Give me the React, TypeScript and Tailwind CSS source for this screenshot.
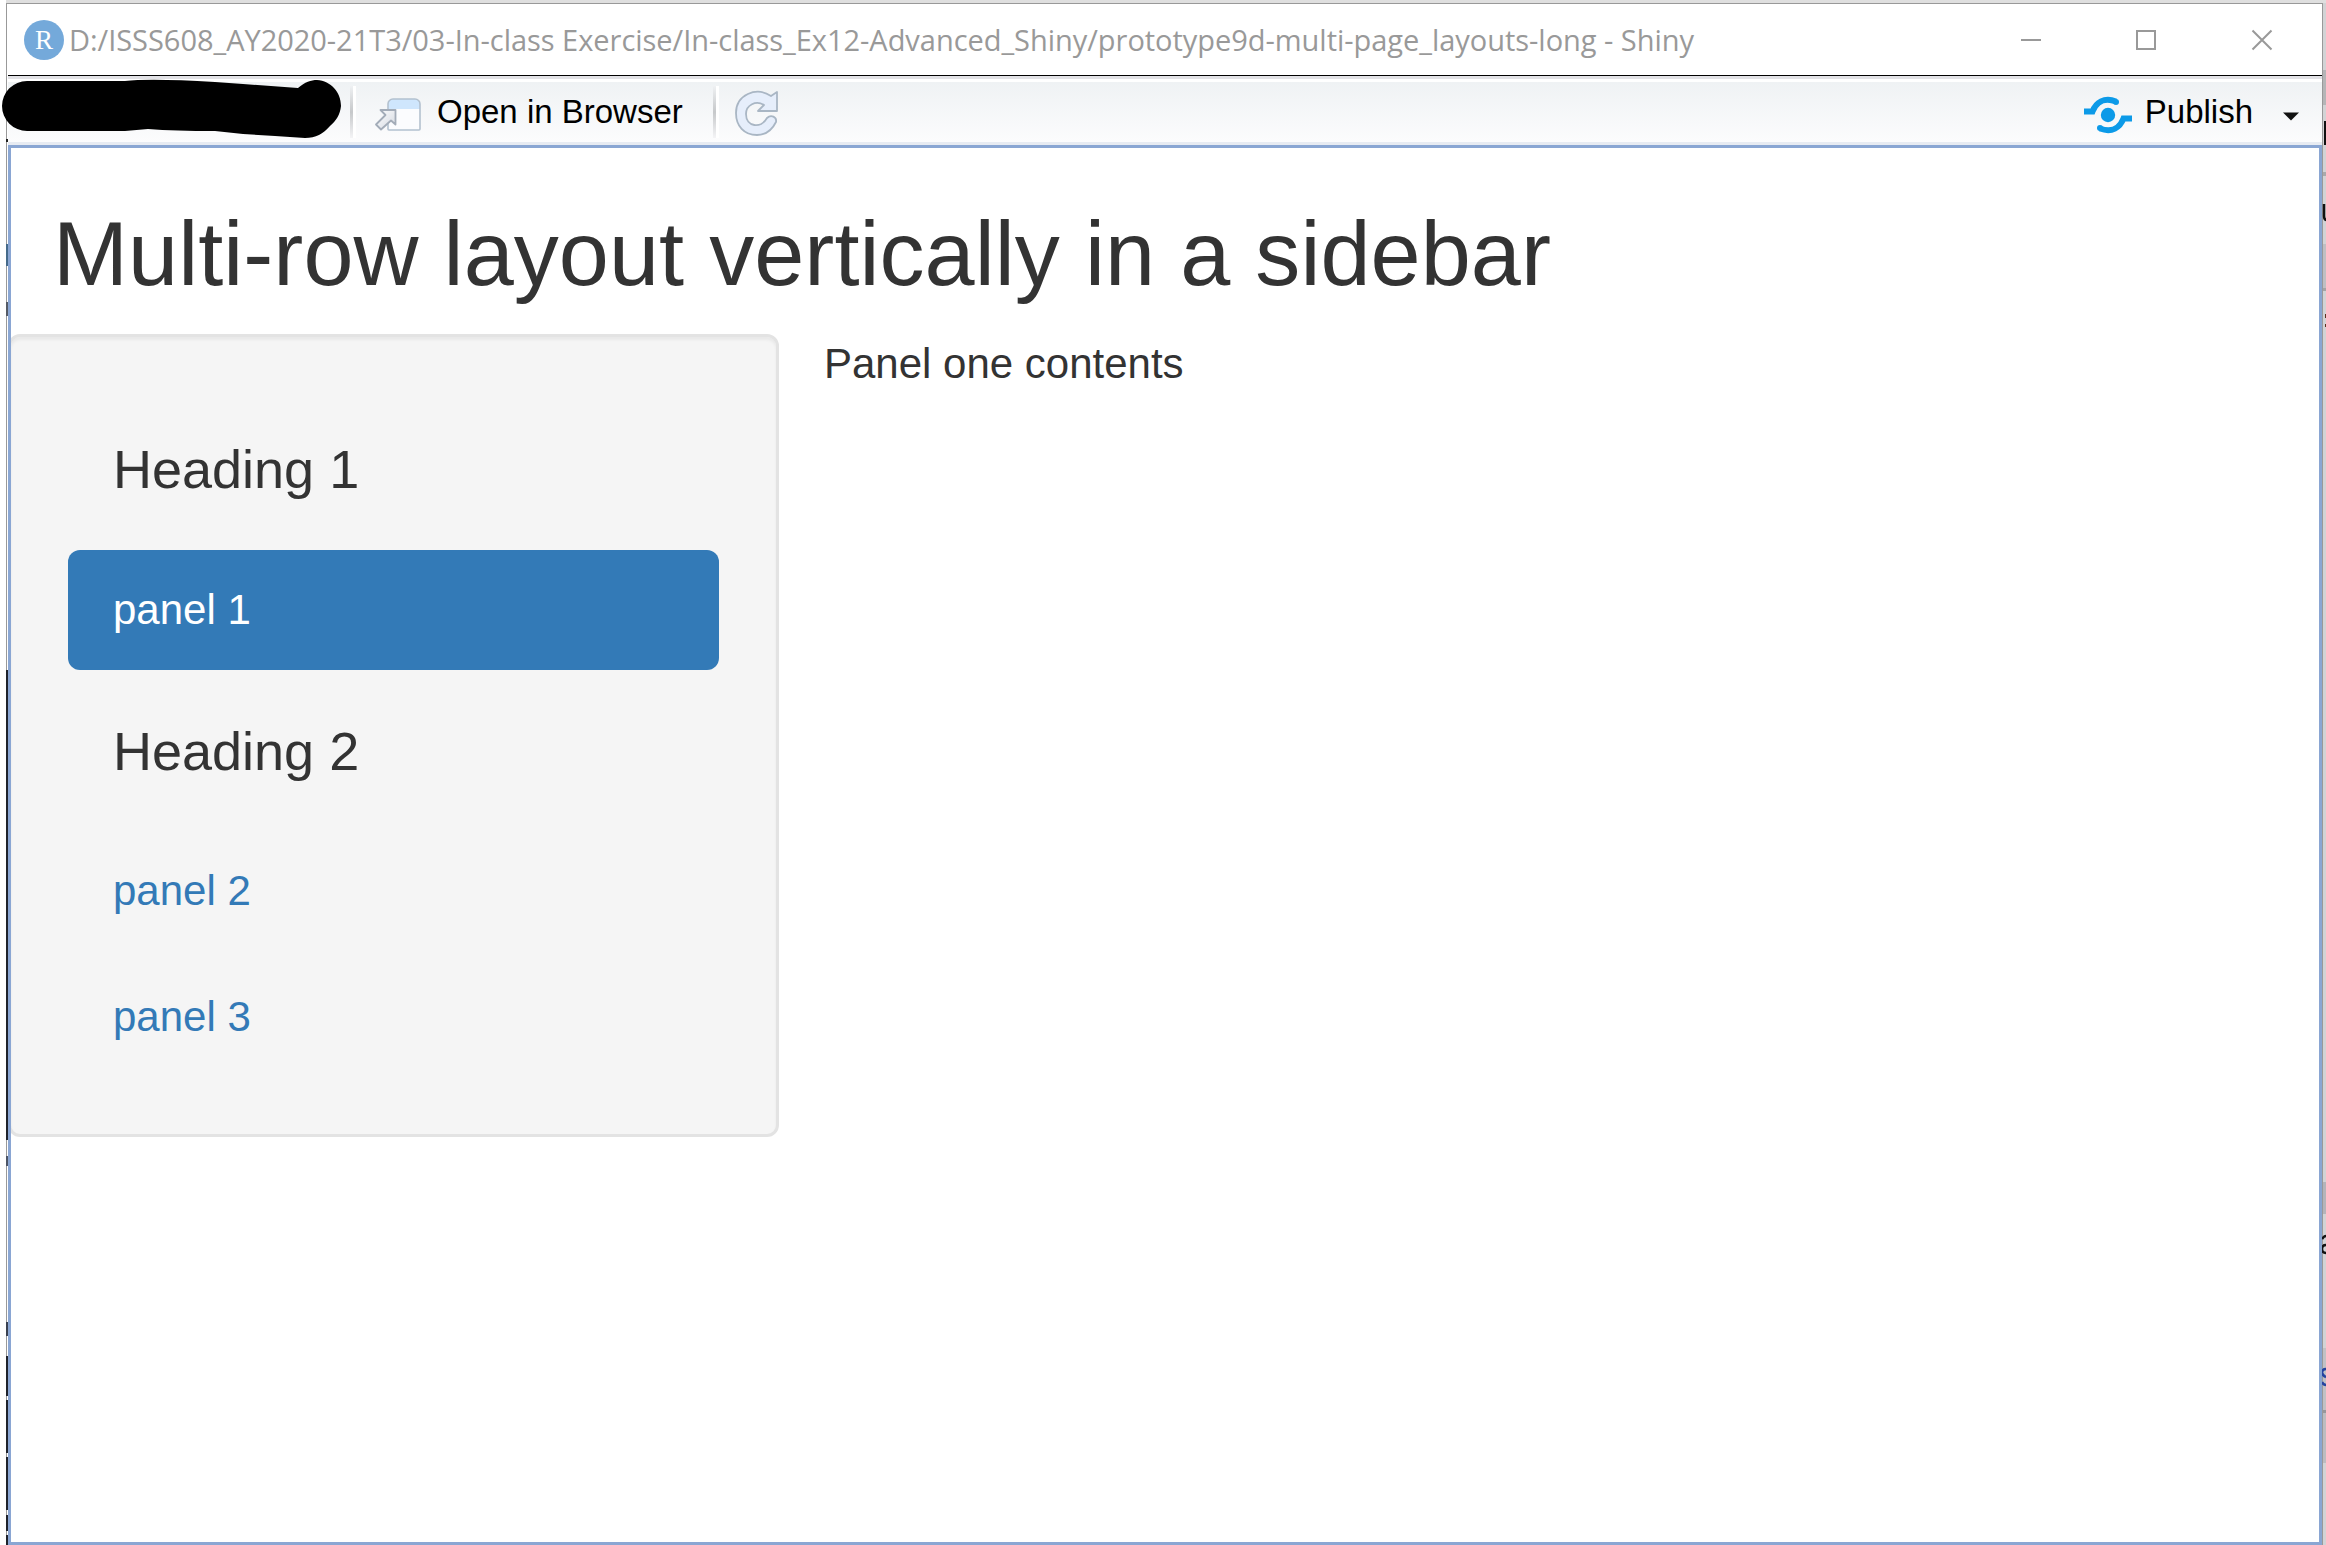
import React from "react";

const OpenInBrowserIcon = () => (
  <svg width="48" height="38" viewBox="0 0 48 38" fill="none">
    <defs>
      <linearGradient id="arrow" x1="0" y1="0" x2="1" y2="1">
        <stop offset="0" stopColor="#fff" />
        <stop offset="1" stopColor="#d3d8e0" />
      </linearGradient>
    </defs>
    <path d="M14 8a5 5 0 0 1 5-5h22a5 5 0 0 1 5 5v26H14z" fill="#fbfcfe" />
    <path d="M14 13V8a5 5 0 0 1 5-5h22a5 5 0 0 1 5 5v5z" fill="#cfe6fd" />
    <path d="M14 8a5 5 0 0 1 5-5h22a5 5 0 0 1 5 5v25a1 1 0 0 1-1 1H15a1 1 0 0 1-1-1z" stroke="#b3c1cf" strokeWidth="1.6" />
    <path d="M6.500 14H21.500V28.500L17 24.500 7 33.500 2 28.500 11.500 19z" fill="url(#arrow)" stroke="#a3acb8" strokeWidth="1.8" strokeLinejoin="round" />
  </svg>
);

const ReloadIcon = () => (
  <svg width="46" height="48" viewBox="0 0 46 48" fill="none">
    <path
      d="M43 3v19H24l6-6c-8-5-18 0-18 9 0 13 15 15 21 4 4-4 10-1 9 4-4 8-10 13-19 13C10 46 2 37 2 24 2 6 22-3 37 7z"
      fill="#e6eefb"
      stroke="#a9b6c4"
      strokeWidth="1.8"
      strokeLinejoin="round"
    />
  </svg>
);

const PublishIcon = () => (
  <svg width="48" height="38" viewBox="0 0 48 38" fill="none">
    <circle cx="24" cy="19" r="7.2" fill="#0c9ae8" />
    <path d="M0 15.500h8.500C12 6.500 20 1 32 5.500" stroke="#0c9ae8" strokeWidth="6" />
    <circle cx="32" cy="6" r="3" fill="#0c9ae8" />
    <path d="M48 22.500h-8.500C36 31.500 28 37 16 32.500" stroke="#0c9ae8" strokeWidth="6" />
    <circle cx="16" cy="32" r="3" fill="#0c9ae8" />
  </svg>
);

const Separator = () => (
  <div className="flex h-[52px] w-[6px]">
    <div className="w-[3px] bg-linear-to-b from-[#eff1f3] via-[#c6c8ca] to-[#f4f4f6]" />
    <div className="w-[3px] bg-white" />
  </div>
);

const TitleBar = () => (
  <div className="flex h-[72px] items-center bg-white">
    <div className="ml-[17px] flex size-10 shrink-0 items-center justify-center rounded-full bg-[#74a9da] font-['Liberation_Serif'] text-[27px] leading-none text-white">
      R
    </div>
    <div className="ml-[5px] w-[1626px] whitespace-nowrap font-['Open_Sans'] text-[29px] leading-[40px] tracking-[-0.035px] text-[#999]">
      D:/ISSS608_AY2020-21T3/03-In-class Exercise/In-class_Ex12-Advanced_Shiny/prototype9d-multi-page_layouts-long - Shiny
    </div>
    <div className="ml-auto mr-[49px] flex items-center gap-[95px]">
      <div className="h-[2px] w-5 bg-[#999]" />
      <div className="size-5 border-2 border-[#999]" />
      <svg width="22" height="22" viewBox="0 0 22 22">
        <path d="M1.500 1.500l19 19M20.500 1.500l-19 19" stroke="#999" strokeWidth="2" />
      </svg>
    </div>
  </div>
);

const Toolbar = () => (
  <div className="flex h-[70px] flex-col border-t border-black">
    <div className="h-[3px] bg-[#e2e2e6]" />
    <div className="h-[3px] bg-white" />
    <div className="flex h-[60px] items-center bg-linear-to-b from-[#eff2f4] to-[#fcfcfd] font-['Liberation_Sans'] text-[33px] text-black">
      <div className="ml-[342px]">
        <Separator />
      </div>
      <div className="ml-[18px] mt-[6px]">
        <OpenInBrowserIcon />
      </div>
      <span className="ml-[15px] leading-[40px]">Open in Browser</span>
      <div className="ml-[30px]">
        <Separator />
      </div>
      <div className="ml-[15px] mt-[2px]">
        <ReloadIcon />
      </div>
      <div className="ml-auto mt-[6px]">
        <PublishIcon />
      </div>
      <span className="ml-[13px] leading-[40px]">Publish</span>
      <svg className="ml-[30px] mr-[23px] mt-[9px]" width="16" height="9" viewBox="0 0 16 9">
        <path d="M0 0.500h16L8 8.500z" fill="#111" />
      </svg>
    </div>
    <div className="h-[3px] bg-[#e7ebf2]" />
  </div>
);

const Heading = ({ children }: { children: React.ReactNode }) => (
  <li className="px-[45px] py-[45px] text-[54px] leading-[60px]">{children}</li>
);

const Panel = ({ children, active }: { children: React.ReactNode; active?: boolean }) => (
  <li
    className={
      active
        ? "rounded-[12px] bg-[#337ab7] px-[45px] py-[30px] leading-[60px] text-white"
        : "px-[45px] pb-[31px] pt-[29px] leading-[60px] text-[#337ab7]"
    }
  >
    {children}
  </li>
);

const leftEdge = [
  [670, 470, "#1e222b"],
  [244, 22, "#456a8a"],
  [302, 14, "#555b66"],
  [139, 3, "#222"],
  [1156, 10, "#4d5566"],
  [1322, 14, "#3a4150"],
  [1356, 40, "#1e222b"],
  [1400, 53, "#1e222b"],
  [1457, 53, "#1e222b"],
  [1515, 16, "#1e222b"],
  [1535, 10, "#1e222b"],
] as const;

const rightEdge = [
  [70, 35, "#b5b5b7"],
  [172, 4, "#a9a9ab"],
  [244, 44, "#bfbfc3"],
  [288, 3, "#a4a4a6"],
  [1182, 32, "#b4b4ba"],
  [1348, 62, "#c1c1c5"],
  [1410, 3, "#97979b"],
  [1413, 50, "#bcbcc0"],
] as const;

export default function App() {
  return (
    <div className="relative flex h-[1545px] w-[2326px] flex-col overflow-hidden bg-white">
      <div className="ml-[6px] h-[3px] shrink-0 bg-[#dfdfdf]" />
      <div className="flex min-h-0 flex-1">
        <div className="w-[6px] bg-white" />
        <div className="w-[2317px] border-l border-r border-t border-[#999] pl-px">
          <div className="flex h-full w-[2314px] flex-col">
            <div className="-ml-px">
              <TitleBar />
            </div>
            <div className="-mt-px">
              <Toolbar />
            </div>
            <div className="flex-1 overflow-hidden border-[3px] border-[#8aa6d3] bg-white font-['Liberation_Sans'] text-[42px] text-[#333]">
              <h2 className="ml-[42px] mt-[57px] text-[90px] leading-[99px] tracking-[0.06px]">
                Multi-row layout vertically in a sidebar
              </h2>
              <div className="mt-[30px] flex items-start">
                <ul className="-ml-[3px] flex h-[803px] w-[771px] flex-col gap-[6px] rounded-[12px] border-[3px] border-[#e3e3e3] bg-[#f5f5f5] p-[57px] shadow-[inset_0_3px_3px_rgba(0,0,0,0.05)]">
                  <Heading>Heading 1</Heading>
                  <Panel active>panel 1</Panel>
                  <Heading>Heading 2</Heading>
                  <Panel>panel 2</Panel>
                  <Panel>panel 3</Panel>
                </ul>
                <p className="ml-[45px] leading-[60px]">Panel one contents</p>
              </div>
            </div>
          </div>
        </div>
        <div className="w-[3px] bg-[#d2d3d5]" />
      </div>

      {/* Slivers of the windows behind this one */}
      <svg className="absolute left-[6px] top-0" width="2" height="1545">
        {leftEdge.map(([y, h, c]) => (
          <rect key={y} x="0" y={y} width="2" height={h} fill={c} />
        ))}
      </svg>
      <svg className="absolute right-0 top-0" width="4" height="1545">
        {rightEdge.map(([y, h, c]) => (
          <rect key={y} x="1" y={y} width="3" height={h} fill={c} />
        ))}
        <rect x="2" y="121" width="2" height="24" fill="#111" />
        <path d="M2 204v12q0 4 3 4" stroke="#111" strokeWidth="2.500" fill="none" />
        <path d="M3 314h1v4h-1zM3 324h1v3h-1z" fill="#5a3020" />
        <path d="M0 1239q2-3 4-3M4 1245q-4 0-4 4t4 4" stroke="#111" strokeWidth="2.500" fill="none" />
        <path d="M4 1369q-4 0-4 4 1 3 4 4M0 1382q1 3 4 3" stroke="#2543a0" strokeWidth="2.500" fill="none" />
      </svg>

      {/* Marker stroke that hides the address */}
      <svg className="absolute left-0 top-[76px]" width="346" height="66" viewBox="0 76 346 66">
        <path d="M27 81H125Q150 78 215 82L243 84 298 88C305 82 311 80 317 80 331 81 341 92 341 106 340 115 336 121 330 126 323 134 316 138 305 138L275 136 243 134 215 131Q175 131 148 129L125 131H27A25 25 0 0 1 27 81z" fill="#000" />
      </svg>
    </div>
  );
}
